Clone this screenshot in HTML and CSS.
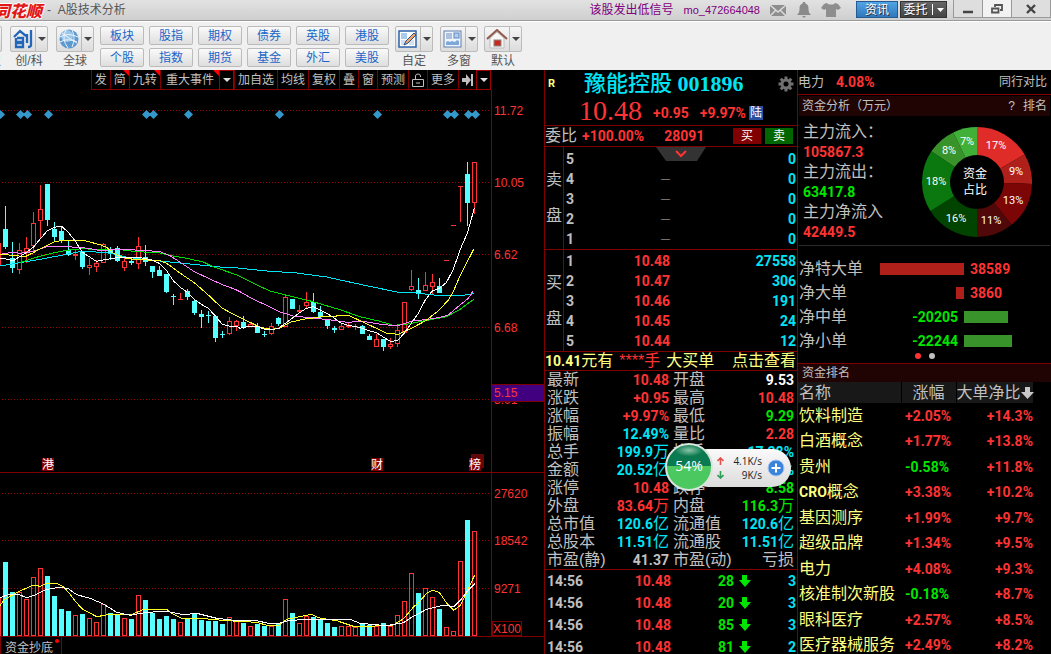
FILE: index.html
```html
<!DOCTYPE html>
<html lang="zh-CN">
<head>
<meta charset="utf-8">
<title>A股技术分析</title>
<link rel="stylesheet" href="styles.css">
</head>
<body>
<div class="app">
  <header class="titlebar">
    <span class="logo">同花顺</span>
    <span class="title">- &nbsp;A股技术分析</span>
    <a class="signal" href="#">该股发出低信号</a>
    <a class="user" href="#">mo_472664048</a>
    <div class="tray">
      <svg width="17" height="18" viewBox="0 0 17 18"><rect x="0" y="4" width="16" height="11" fill="#8e8e8e"/><path d="M0 4l8 7 8-7M0 15l6-6M16 15l-6-6" fill="none" stroke="#dcdcdc" stroke-width="1.5"/></svg>
      <svg width="16" height="18" viewBox="0 0 16 18"><path d="M8 1c1 0 1.500.6 1.500 1.400C12 3.500 12.500 5 12.500 8c0 3 .8 4.500 2.500 6H1c1.700-1.500 2.500-3 2.500-6 0-3 .5-4.500 3-5.600C6.500 1.600 7 1 8 1z" fill="#8a8a8a"/><path d="M6 15h4l-2 2z" fill="#8a8a8a"/></svg>
      <svg width="20" height="18" viewBox="0 0 20 18"><path d="M6 2c1 2 7 2 8 0l3 1 3 4-3 2-2-1v8H5V8L3 9 0 7l3-4z" fill="#8e8e8e"/></svg>
    </div>
    <button class="news">资讯</button>
    <button class="trade">委托<i></i><svg width="7" height="4"><path d="M0 0h7L3.500 4z" fill="#fff"/></svg></button>
    <div class="win">
      <button aria-label="最小化"><svg width="10" height="10"><path d="M0 8h10" stroke="#444" stroke-width="2.500"/></svg></button>
      <button class="lit" aria-label="还原"><svg width="12" height="10"><path d="M4 3V1h7v5H9M1 4.500h6.500v4H1z" fill="none" stroke="#555" stroke-width="1.800"/></svg></button>
      <button class="wide" aria-label="关闭"><svg width="10" height="10"><path d="M1 1l8 8M9 1L1 9" stroke="#444" stroke-width="2.400"/></svg></button>
    </div>
  </header>

  <nav class="tools">
    <div class="tool stub"><button class="split"><span></span></button><span>史</span></div>
    <div class="tool">
      <button class="split"><span><svg width="20" height="20" viewBox="0 0 20 20"><path d="M1 8l6-6 6 5M4 9h6v4H2M3 9v7M3 18v-4h7v4zM14 5v9M18 1v15q0 2-3 2" fill="none" stroke="#2367b8" stroke-width="2.300"/></svg></span><b></b></button>
      <span>创/科</span>
    </div>
    <div class="tool">
      <button class="split"><span><svg width="20" height="20" viewBox="0 0 20 20"><circle cx="10" cy="10" r="9.500" fill="#5d98cf"/><circle cx="8" cy="7" r="6" fill="#9cc7ea"/><path d="M1 8q8-5 18 0M1 13q9-5 17 1M7 1q-5 9 2 18M13 1q4 8 0 17M3 4q7 6 15 9" fill="none" stroke="#eaf5fd"/></svg></span><b></b></button>
      <span>全球</span>
    </div>
    <div class="quick">
      <button>板块</button><button>股指</button><button>期权</button><button>债券</button><button>英股</button><button>港股</button>
      <button>个股</button><button>指数</button><button>期货</button><button>基金</button><button>外汇</button><button>美股</button>
    </div>
    <div class="tool">
      <button class="split"><span><svg width="20" height="20" viewBox="0 0 20 20"><rect x="1" y="2" width="17" height="16" fill="#fff" stroke="#2c62a8" stroke-width="1.500"/><path d="M3 4h6v6H3z" fill="#a9cbee"/><path d="M3 11h6v5H3zM11 11h5v5h-5z" fill="#cfe2f5"/><path d="M6 16l2-4 8-8 2 2-8 8z" fill="#f3a46c" stroke="#284f86"/></svg></span><b></b></button>
      <span>自定</span>
    </div>
    <div class="tool">
      <button class="split"><span><svg width="20" height="20" viewBox="0 0 20 20"><rect x="1" y="2" width="17" height="16" fill="#eef4fb" stroke="#5c7fae"/><path d="M3 5h6M3 7h6M3 9h6" stroke="#6f8fbb"/><rect x="11" y="4" width="5" height="5" fill="#b4cdea" stroke="#5c86bb"/><path d="M3 16v-3l2-1 2 1 2-1 3 1 2-2 2 1v4z" fill="#7fa7d8"/></svg></span><b></b></button>
      <span>多窗</span>
    </div>
    <div class="tool">
      <button class="split"><span><svg width="22" height="20" viewBox="0 0 22 20"><path d="M4 9l7-6 7 6v10H4z" fill="#f7f7f5" stroke="#bbb"/><path d="M1 10L11 1l10 9" fill="none" stroke="#8f5a4b" stroke-width="2"/><rect x="8" y="11" width="7" height="6" fill="#c8281e" stroke="#888"/></svg></span><b></b></button>
      <span>默认</span>
    </div>
  </nav>

  <main class="main">
    <section class="chart">
      <div class="chartbar">
        <button>发</button><button class="hot">简</button><button class="hot">九转</button><button class="hot events">重大事件</button><button class="drop" aria-label="事件菜单"><i></i></button><button>加自选</button><button>均线</button><button>复权</button><button>叠</button><button>窗</button><button>预测</button><button aria-label="锁定"><svg width="12" height="14" viewBox="0 0 12 14"><path d="M.5 6.500h11v7H.5zM3.500 6V3q0-2 2.500-2t2.500 2v1M4 10h4" fill="none" stroke="#c0c0c0"/></svg></button><button>更多</button><button aria-label="末端"><svg width="11" height="12" viewBox="0 0 11 12"><path d="M0 4h4V0l5 6-5 6V8H0z" fill="#c0c0c0"/><path d="M10 0v12" stroke="#c0c0c0" stroke-width="2"/></svg></button><button class="drop" aria-label="更多菜单"><i></i></button>
      </div>
      <svg id="kline" class="kline" viewBox="0 90 544 547" role="img" aria-label="K线与成交量"></svg>
      <div class="tabs"><button>资金抄底<i></i></button></div>
    </section>

    <section class="quote">
      <div class="head">
        <div class="name"><b class="r">R</b><h1>豫能控股 <strong>001896</strong></h1>
          <svg width="16" height="16" viewBox="-8 -8 16 16"><circle r="4" fill="none" stroke="#707070" stroke-width="3"/><path d="M0-7.500V-5M0 7.500V5M-7.500 0H-5M7.500 0H5M-5.300-5.300l1.800 1.800M5.300 5.300L3.500 3.500M-5.300 5.300l1.800-1.800M5.300-5.300L3.500-3.500" stroke="#707070" stroke-width="3"/></svg>
        </div>
        <div class="last"><span class="price">10.48</span><b>+0.95</b><b>+9.97%</b><span class="lu">陆</span></div>
      </div>
      <div class="ratio"><span>委比</span><b>+100.00%</b><b class="amt">28091</b><button class="buy">买</button><button class="sell">卖</button></div>
      <div class="ladder asks">
        <div class="side"><span>卖</span><span>盘</span></div>
        <table>
          <tr><th>5</th><td></td><td>0</td></tr>
          <tr><th>4</th><td class="dash">—</td><td>0</td></tr>
          <tr><th>3</th><td class="dash">—</td><td>0</td></tr>
          <tr><th>2</th><td class="dash">—</td><td>0</td></tr>
          <tr><th>1</th><td class="dash">—</td><td>0</td></tr>
        </table>
        <button class="fold" aria-label="展开"><svg width="50" height="14"><path d="M0 0h50l-9 14H10z" fill="#333"/><path d="M20 4l5 5 5-5" fill="none" stroke="#ff3333" stroke-width="2"/></svg></button>
      </div>
      <div class="ladder">
        <div class="side"><span>买</span><span>盘</span></div>
        <table>
          <tr><th>1</th><td>10.48</td><td>27558</td></tr>
          <tr><th>2</th><td>10.47</td><td>306</td></tr>
          <tr><th>3</th><td>10.46</td><td>191</td></tr>
          <tr><th>4</th><td>10.45</td><td>24</td></tr>
          <tr><th>5</th><td>10.44</td><td>12</td></tr>
        </table>
      </div>
      <div class="strip"><span><b>10.41</b>元有</span><span class="up">****手</span><span>大买单</span><a href="#">点击查看</a></div>
      <table class="stats">
        <tr><th>最新</th><td class="up">10.48</td><th>开盘</th><td class="wh">9.53</td></tr>
        <tr><th>涨跌</th><td class="up">+0.95</td><th>最高</th><td class="up">10.48</td></tr>
        <tr><th>涨幅</th><td class="up">+9.97%</td><th>最低</th><td class="dn">9.29</td></tr>
        <tr><th>振幅</th><td>12.49%</td><th>量比</th><td class="up">2.28</td></tr>
        <tr><th>总手</th><td>199.9<i>万</i></td><th>换手</th><td>17.38%</td></tr>
        <tr><th>金额</th><td>20.52<i>亿</i></td><th>换手</th><td>17.38%</td></tr>
        <tr><th>涨停</th><td class="up">10.48</td><th>跌停</th><td class="dn">8.58</td></tr>
        <tr><th>外盘</th><td class="up">83.64<i>万</i></td><th>内盘</th><td class="dn">116.3<i>万</i></td></tr>
        <tr><th>总市值</th><td>120.6<i>亿</i></td><th>流通值</th><td>120.6<i>亿</i></td></tr>
        <tr><th>总股本</th><td>11.51<i>亿</i></td><th>流通股</th><td>11.51<i>亿</i></td></tr>
        <tr><th>市盈(静)</th><td class="gy">41.37</td><th>市盈(动)</th><td class="gy"><i>亏损</i></td></tr>
      </table>
      <table class="ticks">
        <tr><th>14:56</th><td class="up">10.48</td><td class="dn">28</td><td class="arr"><svg width="12" height="12"><path d="M3 0h5v5h4L6 12 0 5h3z" fill="#00e600"/></svg></td><td>3</td></tr>
        <tr><th>14:56</th><td class="up">10.48</td><td class="dn">20</td><td class="arr"><svg width="12" height="12"><path d="M3 0h5v5h4L6 12 0 5h3z" fill="#00e600"/></svg></td><td>3</td></tr>
        <tr><th>14:56</th><td class="up">10.48</td><td class="dn">85</td><td class="arr"><svg width="12" height="12"><path d="M3 0h5v5h4L6 12 0 5h3z" fill="#00e600"/></svg></td><td>3</td></tr>
        <tr><th>14:56</th><td class="up">10.48</td><td class="dn">81</td><td class="arr"><svg width="12" height="12"><path d="M3 0h5v5h4L6 12 0 5h3z" fill="#00e600"/></svg></td><td>2</td></tr>
      </table>
      <div class="meter">
        <div class="ball">54%</div>
        <div class="speed">
          <svg width="7" height="8"><path d="M3.500 8V1M.5 4l3-3 3 3" fill="none" stroke="#e0524a" stroke-width="1.600"/></svg><span>4.1K/s</span>
          <svg width="7" height="8"><path d="M3.500 0v7M.5 4l3 3 3-3" fill="none" stroke="#2f9e57" stroke-width="1.600"/></svg><span>9K/s</span>
        </div>
        <button aria-label="加速"><svg width="18" height="18"><circle cx="9" cy="9" r="8" fill="#3a84dc" stroke="#a9c8ee"/><path d="M9 4.500v9M4.500 9h9" stroke="#fff" stroke-width="2"/></svg></button>
      </div>
    </section>

    <section class="funds">
      <div class="sector"><span>电力</span><b>4.08%</b><a href="#">同行对比</a></div>
      <div class="caption"><span>资金分析（万元）</span><a href="#">?</a><a href="#">排名</a></div>
      <div class="flow">
        <dl>
          <dt>主力流入：</dt><dd class="up">105867.3</dd>
          <dt>主力流出：</dt><dd class="dn">63417.8</dd>
          <dt>主力净流入</dt><dd class="up">42449.5</dd>
        </dl>
        <svg class="donut" width="110" height="110" viewBox="0 0 110 110">
          <path d="M55 55V0A55 55 0 0 1 102.600 27.500z" fill="#e02c28"/>
          <path d="M55 55L102.600 27.500A55 55 0 0 1 110 56.900z" fill="#b0201a"/>
          <path d="M55 55L110 56.900A55 55 0 0 1 89.600 97.700z" fill="#7c0606"/>
          <path d="M55 55L89.600 97.700A55 55 0 0 1 55 110z" fill="#500808"/>
          <path d="M55 55V110A55 55 0 0 1 8.400 84.100z" fill="#004400"/>
          <path d="M55 55L8.400 84.100A55 55 0 0 1 9.400 24.200z" fill="#0a780e"/>
          <path d="M55 55L9.400 24.200A55 55 0 0 1 31.300 5.400z" fill="#38942a"/>
          <path d="M55 55L31.300 5.400A55 55 0 0 1 55 0z" fill="#40b038"/>
          <circle cx="55" cy="55" r="27" fill="#000"/>
          <text x="74" y="22">17%</text><text x="94" y="48">9%</text><text x="91" y="77">13%</text><text x="69" y="97">11%</text><text x="34" y="95">16%</text><text x="14" y="58">18%</text><text x="27" y="27">8%</text><text x="45" y="18">7%</text>
          <text class="mid" x="53" y="51">资金</text><text class="mid" x="53" y="67">占比</text>
        </svg>
      </div>
      <div class="net">
        <div class="row"><span>净特大单</span><div class="neg"><i style="width:84px"></i></div><div class="pos up">38589</div></div>
        <div class="row"><span>净大单</span><div class="neg"><i style="width:8px"></i></div><div class="pos up">3860</div></div>
        <div class="row"><span>净中单</span><div class="neg dn">-20205</div><div class="pos"><i style="width:44px"></i></div></div>
        <div class="row"><span>净小单</span><div class="neg dn">-22244</div><div class="pos"><i style="width:48px"></i></div></div>
        <div class="dots"><i class="on"></i><i></i></div>
      </div>
      <div class="caption rank"><span>资金排名</span></div>
      <table class="sectors">
        <thead><tr><th>名称</th><th>涨幅</th><th>大单净比<svg width="13" height="13"><path d="M4 0h5v5h4L6.500 12 0 5h4z" fill="#c8c8c8"/></svg></th></tr></thead>
        <tbody>
        <tr><td>饮料制造</td><td>+2.05%</td><td>+14.3%</td></tr>
        <tr><td>白酒概念</td><td>+1.77%</td><td>+13.8%</td></tr>
        <tr><td>贵州</td><td class="dn">-0.58%</td><td>+11.8%</td></tr>
        <tr><td><b>CRO</b>概念</td><td>+3.38%</td><td>+10.2%</td></tr>
        <tr><td>基因测序</td><td>+1.99%</td><td>+9.7%</td></tr>
        <tr><td>超级品牌</td><td>+1.34%</td><td>+9.5%</td></tr>
        <tr><td>电力</td><td>+4.08%</td><td>+9.3%</td></tr>
        <tr><td>核准制次新股</td><td class="dn">-0.18%</td><td>+8.7%</td></tr>
        <tr><td>眼科医疗</td><td>+2.57%</td><td>+8.5%</td></tr>
        <tr><td>医疗器械服务</td><td>+2.49%</td><td>+8.2%</td></tr>
        </tbody>
      </table>
    </section>
  </main>
</div>
<script src="chart.js"></script>
</body>
</html>
```
FILE: styles.css
```css
* { box-sizing: border-box; }
body { margin: 0; background: #000; color: #c0c0c0; font: 12px/16px "Liberation Sans", "Noto Sans CJK SC", sans-serif; }
button { margin: 0; padding: 0; border: 0; background: none; color: inherit; font: inherit; white-space: nowrap; }
a { color: inherit; text-decoration: none; }
i { font-style: normal; }
svg { display: block; flex: none; }
table { border-collapse: collapse; table-layout: fixed; width: 100%; }
th, td { padding: 0; font-weight: 400; text-align: left; white-space: nowrap; overflow: hidden; }
b, td, dd { font-family: Roboto, "Noto Sans CJK SC", sans-serif; font-size: 14px; font-weight: 700; }
.app { display: flex; flex-direction: column; height: 100vh; overflow: hidden; }

.titlebar { display: flex; align-items: center; flex: none; height: 21px; padding-bottom: 1px; background: linear-gradient(#e2e2e2, #cfcfcf); border-bottom: 1px solid #999; color: #555; overflow: hidden; white-space: nowrap; }
.logo { margin-left: -6px; color: #e01818; font: italic 900 16px/20px "Noto Sans CJK SC", sans-serif; text-shadow: 1px 0 #fff, -1px 0 #fff, 0 1px #fff, 0 -1px #fff; }
.title { margin-left: 5px; }
.signal { margin-left: auto; color: #800080; }
.user { margin-left: 10px; color: #800080; font-size: 11px; }
.tray { display: flex; align-items: center; gap: 9px; margin: 0 15px 0 10px; }
.news, .trade { height: 17px; border: 1px solid #245a90; color: #fff; line-height: 14px; text-shadow: 1px 1px #2a2a2a; }
.news { width: 42px; background: linear-gradient(#52a4e4, #2f78bc); }
.trade { display: flex; align-items: center; justify-content: center; gap: 4px; width: 47px; margin: 0 6px 0 2px; border-color: #333; background: linear-gradient(#666, #444); }
.trade i { width: 1px; height: 11px; background: #fff; }
.win { display: flex; align-self: flex-start; height: 18px; border: solid #999; border-width: 0 1px 1px; background: #dedede; }
.win button { display: grid; place-items: center; width: 29px; border-right: 1px solid #999; }
.win .lit { background: #f2f2f2; }
.win .wide { width: 38px; border: 0; }

.tools { display: flex; flex: none; height: 49px; padding: 4px 0 0 0; background: #f0f0f0; border-top: 1px solid #fff; color: #555; }
.tool { display: flex; flex-direction: column; align-items: center; gap: 1px; width: 38px; margin-right: 7px; }
.tool + .tool { margin-right: 6px; }
.tool > span { white-space: nowrap; }
.stub { width: 38px; margin: 0 8px 0 -36px; align-items: flex-end; }
.stub > span { padding-right: 1px; }
.stub + .tool { margin-right: 8px; }
.split { display: flex; width: 38px; height: 26px; border: 1px solid #bbb; border-radius: 2px; background: linear-gradient(#f6f6f6, #dcdcdc); }
.split span { display: grid; place-items: center; flex: 1; }
.split b { display: grid; place-items: center; width: 12px; border-left: 1px solid #bbb; }
.split b::before { content: ""; border: 4px solid transparent; border-top-color: #444; border-bottom: 0; }
.quick { display: grid; grid-template-columns: repeat(6, 44px); grid-auto-rows: 19px; gap: 3px 5px; margin-right: 6px; }
.quick button { border: 1px solid #bbb; border-radius: 2px; background: linear-gradient(#fafafa, #dedede); color: #1a66c8; line-height: 16px; }

.main { display: grid; grid-template-columns: 544fr 253fr 254fr; flex: 1; min-height: 0; }
.up { color: #ff3333; }
.dn { color: #00e600; }

.chart { display: flex; flex-direction: column; min-width: 0; overflow: hidden; }
.chartbar { display: flex; justify-content: flex-end; flex: none; height: 20px; padding-right: 53px; }
.chartbar button { position: relative; padding: 0 3px; border: solid #800000; border-width: 0 0 1px 1px; }
.chartbar .events { padding: 0 5px; }
.chartbar .hot::after { content: ""; position: absolute; top: 0; right: 0; border: 3px solid #ff0000; border-left-color: transparent; border-bottom-color: transparent; }
.chartbar .drop { display: grid; place-items: center; width: 15px; border: 1px solid #a00000; }
.drop i { border: 4px solid transparent; border-top-color: #ddd; border-bottom: 0; }
.kline { width: 100%; height: auto; }
.kline text { fill: #ff3333; font-size: 12px; }
.kline .tag { fill: #fff; font-size: 12px; }
.tabs button { position: relative; height: 22px; padding: 0 8px 0 4px; border: solid #800000; border-width: 0 1px 0 1px; line-height: 20px; }
.tabs i { position: absolute; top: 2px; right: 2px; width: 4px; height: 4px; border-radius: 2px; background: #ff0000; }

.quote { position: relative; min-width: 0; border-left: 1px solid #800000; overflow: hidden; }
.head { border-bottom: 1px solid #800000; height: 56px; }
.name { display: flex; align-items: center; height: 27px; padding: 0 3px 0 3px; }
.name .r { width: 36px; color: #ffff80; font-size: 11px; }
.name h1 { flex: 1; margin: 0; color: #00e5f5; font: 500 22px/26px "Liberation Serif", "Noto Sans CJK SC", serif; white-space: nowrap; }
.name strong { font-weight: 700; }
.last { display: flex; align-items: center; gap: 11px; height: 28px; padding-left: 34px; color: #ff3333; }
.price { font: 28px/28px "Liberation Serif", serif; }
.last b { padding-top: 4px; }
.lu { margin: 4px 0 0 -8px; width: 14px; height: 14px; background: #2a4fa0; color: #fff; line-height: 14px; text-align: center; }
.ratio { display: flex; align-items: center; height: 21px; border-bottom: 1px solid #800000; color: #ff3333; }
.ratio span { width: 37px; color: #c0c0c0; font-size: 16px; }
.ratio .amt { margin: 0 auto 0 20px; }
.buy, .sell { width: 28px; height: 16px; margin-right: 4px; color: #fff; line-height: 14px; }
.buy { background: #800000; }
.sell { background: #006600; }
.ladder { position: relative; display: flex; border-bottom: 1px solid #800000; }
.side { display: flex; flex-direction: column; justify-content: center; gap: 20px; flex: none; width: 19px; border-right: 1px solid #800000; font-size: 16px; text-align: center; }
.ladder table { margin: 1px 0 0; }
.asks table { margin-top: 2px; }
.ladder tr { height: 20px; }
.ladder th { width: 16px; padding-left: 2px; font: 700 14px/20px Roboto, sans-serif; }
.ladder td { color: #00e5f5; text-align: right; padding-right: 1px; }
.ladder td:nth-child(2) { width: 91px; color: #ff3333; }
.ladder td.dash { color: #c0c0c0; font: 9px/20px "Liberation Sans", sans-serif; }
.fold { position: absolute; left: 111px; top: 0; }
.strip { display: flex; gap: 6px; height: 19px; border-bottom: 1px solid #800000; color: #ffff80; font-size: 16px; line-height: 18px; white-space: nowrap; }
.strip a { margin-left: auto; padding-right: 1px; }
.stats tr { height: 18px; }
.stats th { width: 51px; padding-left: 2px; font-size: 16px; line-height: 18px; overflow: visible; }
.stats th:nth-child(3) { width: 54px; padding-left: 4px; }
.stats td { padding-right: 3px; color: #00e5f5; line-height: 18px; text-align: right; }
.stats td:nth-child(2) { width: 73px; padding-right: 0; }
.stats i { font-size: 16px; font-weight: 400; }
.stats .up, .ticks .up { color: #ff3333; }
.stats .dn, .ticks .dn { color: #00e600; }
.stats .wh { color: #fff; }
.stats .gy { color: #c0c0c0; }
.ticks { border-top: 1px solid #800000; }
.ticks tr { height: 22px; }
.ticks th { width: 50px; padding-left: 2px; font: 700 14px/22px Roboto, sans-serif; }
.ticks td { padding-right: 1px; color: #00e5f5; text-align: right; }
.ticks td:nth-child(2) { width: 77px; }
.ticks td:nth-child(3) { width: 63px; }
.ticks .arr { width: 20px; padding-left: 4px; }
.meter { position: absolute; left: 144px; top: 379px; display: flex; align-items: center; width: 102px; height: 38px; padding-left: 28px; border-radius: 19px; background: linear-gradient(#fafafa, #dcdcdc); color: #222; }
.ball { position: absolute; left: -24px; top: -6px; width: 48px; height: 48px; border: 2px solid #d8e4dc; border-radius: 50%; background: radial-gradient(ellipse 14px 6px at 50% 12%, #8cc4a8, transparent), linear-gradient(#0b7a50 48%, #4cc860 48%); color: #fff; font: 14px/42px "Open Sans", sans-serif; text-align: center; }
.speed { display: grid; grid-template-columns: 7px 38px; align-items: center; font: 10px/14px "Open Sans", sans-serif; text-align: right; }
.meter button { margin-left: 5px; }

.funds { min-width: 0; border-left: 1px solid #800000; overflow: hidden; }
.sector { display: flex; align-items: center; gap: 12px; height: 25px; padding-right: 4px; border-bottom: 1px solid #800000; font-size: 13px; }
.sector b { color: #ff3333; }
.sector a { margin-left: auto; font-size: 12px; }
.caption { display: flex; gap: 8px; height: 20px; margin: 1px 1px 0; padding: 0 3px; background: #200404; line-height: 20px; }
.caption span { flex: 1; }
.flow { display: flex; justify-content: space-between; height: 130px; margin: 0 1px; padding: 6px 18px 0 4px; border-bottom: 1px solid #2a2a2a; }
.flow dl { margin: 0; font-size: 16px; line-height: 20px; }
.flow dd { margin: 0; }
.donut { margin-top: 5px; }
.donut text { fill: #fff; font: 11px Roboto, sans-serif; text-anchor: middle; }
.donut .mid { font: 12px "Noto Sans CJK SC", sans-serif; }
.net { height: 117px; padding-top: 11px; }
.row { display: grid; grid-template-columns: 80px 86px 1fr; align-items: center; height: 24px; font: 700 14px/24px Roboto, sans-serif; }
.row span { padding-left: 1px; font: 16px/22px "Liberation Sans", "Noto Sans CJK SC", sans-serif; white-space: nowrap; }
.row i { height: 12px; background: #38942a; }
.neg, .pos { display: flex; align-items: center; }
.neg { justify-content: flex-end; }
.neg i { background: #b0201a; }
.neg.dn { padding-right: 6px; }
.pos.up { padding-left: 6px; }
.dots { display: flex; justify-content: center; gap: 8px; }
.dots i { width: 6px; height: 6px; border-radius: 3px; background: #c0c0c0; }
.dots .on { background: #ff3333; }
.rank { height: 19px; margin: 0; padding: 0 4px; border-top: 1px solid #800000; line-height: 18px; }
.sectors { width: calc(100% - 18px); }
.sectors th { height: 21px; background: #181818; font-size: 16px; line-height: 21px; padding-left: 1px; overflow: visible; }
.sectors th + th { padding-left: 0; border-left: 1px solid #000; }
.sectors th:nth-child(1) { width: 103px; }
.sectors th:nth-child(2) { width: 55px; text-align: center; }
.sectors th svg { display: inline-block; vertical-align: -2px; }
.sectors tbody tr { height: 25px; }
.sectors tbody tr:nth-child(even) { height: 26px; }
.sectors td { color: #ff3333; }
.sectors td.dn { color: #00e600; }
.sectors td:nth-child(1) { padding-left: 1px; color: #ffff80; font-size: 16px; font-weight: 400; overflow: visible; }
.sectors td:nth-child(2) { padding-left: 4px; }
.sectors td:nth-child(3) { text-align: right; }
```
FILE: chart.js
```js
// Each candle: colour, high, body top, body bottom, low, volume top (thirds of a pixel).
const candles = `r460,460,528,528,654 c348,417,471,477,546 c456,504,534,549,636 r459,480,540,552,636 r441,474,487,519,657
r366,399,468,486,591 r285,357,393,444,564 c282,282,390,408,588 c396,417,441,456,648 c408,423,453,459,687
c453,481,494,498,693 r480,491,497,510,705 c487,487,531,537,702 r504,525,534,555,714 r510,519,531,546,726
r459,462,518,518,672 c471,477,491,510,699 c468,474,513,516,705 r500,513,534,543,714 c504,513,519,525,717
r441,468,522,537,645 c465,501,515,528,660 c528,528,546,564,699 c528,540,558,558,717 c552,552,606,609,708
c612,618,621,645,717 r609,627,630,630,726 c597,603,621,630,717 c627,633,669,675,702 c660,672,681,714,720
c663,675,678,699,723 c678,678,744,756,723 c723,732,735,744,732 r681,693,732,735,711 r690,693,708,723,723
c678,696,711,717,729 r696,702,711,711,738 c699,708,729,729,732 c723,733,736,741,738 r699,708,732,735,738
c681,684,702,708,732 r615,621,711,711,657 c627,627,657,657,699 r645,660,665,666,729 r606,636,648,657,708
c609,636,666,669,711 c648,666,681,687,717 c687,690,708,717,729 c708,714,720,729,741 r702,708,720,720,738
r699,705,711,714,738 r702,707,711,720,741 c705,708,732,732,732 c732,738,750,750,735 r732,747,771,771,738
c747,747,771,783,729 r744,762,771,777,738 r702,720,762,771,705 r636,636,729,729,663 r540,588,600,603,579
c564,600,612,627,639 r546,585,603,603,624 r552,576,591,612,651 c564,588,609,609,687 r510,510,513,513,741
r405,405,408,408,753 r288,288,291,396,543 c216,252,339,408,420 r216,216,339,372,453`.split(/\s+/);

const RED = "#ff3333", CYAN = "#55ffff";
const P = v => 90 + v / 3;
const V = v => 380 + v / 3;
let out = "";

// Dotted grid and frame lines
for (const y of [110, 182, 254, 327, 399, 493, 540, 588])
  out += `<path d="M2 ${y + .5}H490" stroke="#a00000" stroke-dasharray="1 2"/>`;
out += `<path d="M491.5 90V636.5M0 472.5H544M0 636.5H544" stroke="#800000" fill="none"/>`;

candles.forEach((c, i) => {
  const x = 7 * i - 2;
  const [h, t, b, l, v] = c.slice(1).split(",").map(Number);
  const up = c[0] === "r";
  const col = up ? RED : CYAN;
  const box = (top, bottom) => {
    const a = Math.round(top), z = Math.max(a + 1, Math.round(bottom));
    return up && z - a > 2
      ? `<rect x="${x - 1.5}" y="${a + .5}" width="4" height="${z - a - 1}" fill="none" stroke="${col}"/>`
      : `<rect x="${x - 2}" y="${a}" width="5" height="${z - a}" fill="${col}"/>`;
  };
  out += `<path d="M${x + .5} ${Math.round(P(h))}V${Math.round(P(t))}M${x + .5} ${Math.round(P(b))}V${Math.round(P(l))}" stroke="${col}"/>`;
  out += box(P(t), P(b)) + box(V(v), 636);
});

// Moving averages: two runs, the second one starting further right
function line(colour, a, b, second, y) {
  const conv = (s, off) => s.split(" ").map(p => { const [u, w] = p.split(",").map(Number); return (off + u / 3).toFixed(1) + "," + y(w).toFixed(1); }).join(" ");
  out += `<polyline points="${conv(a, 0)} ${conv(b, second)}" fill="none" stroke="${colour}" stroke-width="1" shape-rendering="crispEdges"/>`;
}
line("#00e5f5", "0,528 60,518 125,507 200,493 250,483 300,487 335,490 380,502 430,508 500,515 580,523 660,531 715,534", "0,535 80,543 170,549 260,561 360,583 475,607 530,609 590,616 670,616 701,611", 240, P);
line("#00dd00", "60,518 90,508 125,497 160,489 200,481 245,476 280,478 350,478 400,484 480,489 520,498 560,505 610,516 640,530 705,553", "0,559 40,580 90,603 140,616 215,634 300,659 360,680 420,694 460,706 500,703 545,694 620,680 660,658 701,628", 240, P);
line("#ff80ff", "0,493 38,487 60,490 95,485 140,470 190,469 265,475 300,482 350,478 430,481 480,485 510,497 541,517 583,545 667,584 705,598", "0,605 40,628 80,646 120,666 160,678 220,684 280,691 320,697 370,694 430,704 475,707 515,693 556,689 600,682 625,675 660,645 685,625 700,602", 240, P);
line("#ffff20", "0,492 75,500 100,488 125,474 163,456 190,450 250,451 300,464 320,472 340,490 370,503 400,508 480,512 500,520 541,550 583,578 625,615 667,655 705,675", "0,683 30,697 60,712 94,718 118,715 150,697 190,688 240,681 325,676 367,695 409,715 440,730 475,733 510,717 556,693 598,660 625,630 640,605 661,555 682,515 701,478", 240, P);
line("#ffffff", "0,506 15,506 40,512 75,490 100,472 125,442 142,422 163,412 184,408 205,427 227,455 247,487 268,500 289,514 310,510 350,503 415,502 455,510 480,521 500,542 520,572 541,592 562,607 583,628 604,643 625,655 646,678 667,703 690,709 715,711", "0,715 30,708 50,709 73,717 94,720 115,715 136,700 157,685 178,669 199,655 220,650 241,661 262,671 283,684 304,700 325,706 346,710 367,715 388,722 409,728 430,741 451,754 472,752 493,730 514,700 535,670 556,630 577,603 598,595 619,578 640,538 661,478 682,430 703,355", 240, P);
line("#ffff20", "0,677 15,657 60,633 100,615 120,619 140,610 170,610 190,620 210,642 227,665 247,687 290,710 330,703 400,702 430,688 500,688 520,703 550,717 600,715 680,722 770,727 805,737", "0,737 25,737 50,718 125,703 145,713 200,722 250,739 300,739 370,735 400,717 430,682 450,663 470,640 488,631 508,637 530,670 551,691 572,675 593,630 614,585", 270, V);
line("#ffffff", "0,654 20,645 55,643 80,653 110,643 140,628 180,622 205,626 230,644 270,655 310,672 350,697 390,706 440,697 500,694 550,704 590,700 650,715 700,721 770,722 805,730", "0,730 30,729 60,721 130,718 240,718 270,730 350,737 400,728 430,709 470,688 520,676 551,680 572,660 593,632 614,611", 270, V);

// Event diamonds
for (const x of [0, 20, 27, 48, 146, 153, 188, 279, 377, 447, 454, 468, 475])
  out += `<path d="M${x - 4} 114.500l4.500-4.500 4.500 4.500-4.500 4.500z" fill="#3399cc"/>`;
for (const x of [20, 146, 447, 468])
  out += `<rect x="${x}" y="113" width="8" height="3" fill="#3399cc"/>`;

// Event tags
out += `<rect x="471" y="454" width="13" height="14" fill="#600808"/>`;
for (const [x, t] of [[42, "港"], [371, "财"], [469, "榜"]])
  out += `<rect x="${x}" y="458" width="12" height="13" fill="#800000"/><text class="tag" x="${x}" y="469">${t}</text>`;

// Axis labels
for (const [y, t] of [[115, "11.72"], [187, "10.05"], [259, "6.62"], [332, "6.68"], [404, "5.01"], [498, "27620"], [545, "18542"], [593, "9271"]])
  out += `<text x="494" y="${y}">${t}</text>`;
out += `<rect x="491.500" y="384.500" width="53" height="17" fill="#400080" stroke="#800000"/><text x="494" y="397">5.15</text>`;
out += `<rect x="492.500" y="621.500" width="29" height="14" fill="none" stroke="#800000"/><text x="493" y="633">X100</text>`;

document.getElementById("kline").innerHTML = out;
```
